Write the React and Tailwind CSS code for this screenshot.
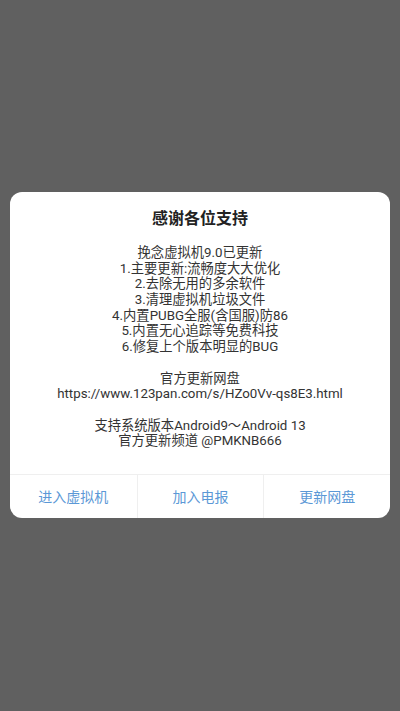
import React from 'react';

export default function App() {
  const lines = [
    "挽念虚拟机9.0已更新",
    "1.主要更新:流畅度大大优化",
    "2.去除无用的多余软件",
    "3.清理虚拟机垃圾文件",
    "4.内置PUBG全服(含国服)防86",
    "5.内置无心追踪等免费科技",
    "6.修复上个版本明显的BUG",
    "",
    "官方更新网盘",
    "https://www.123pan.com/s/HZo0Vv-qs8E3.html",
    "",
    "支持系统版本Android9～Android 13",
    "官方更新频道 @PMKNB666",
  ];

  const buttons = ["进入虚拟机", "加入电报", "更新网盘"];

  return (
    <div
      className="w-[400px] h-[711px] bg-[#606060] flex flex-col pt-[192px] px-[10px]"
      style={{ fontFamily: 'Roboto, "Noto Sans CJK SC", sans-serif' }}
    >
      {/* DIALOG */}
      <div className="bg-white rounded-[12px] flex flex-col overflow-hidden">
        <h2 className="pt-[17px] text-center text-[16px] leading-[20px] font-bold text-[#222]">感谢各位支持</h2>

        <div className="mt-[16px] text-center text-[13.3px] leading-[15.7px] text-[#333]">
          {lines.map((line, idx) => (
            <div key={idx} className="h-[15.7px] whitespace-nowrap">{line}</div>
          ))}
        </div>

        {/* ACTIONS */}
        <div className="mt-[25px] border-t border-[#efefef] grid grid-cols-3 h-[44px]">
          {buttons.map((label, idx) => (
            <div
              key={idx}
              className={`flex items-center justify-center pt-[3px] text-[14px] text-[#5b98d6] ${idx > 0 ? 'border-l border-[#efefef]' : ''}`}
            >
              {label}
            </div>
          ))}
        </div>
      </div>
    </div>
  );
}
